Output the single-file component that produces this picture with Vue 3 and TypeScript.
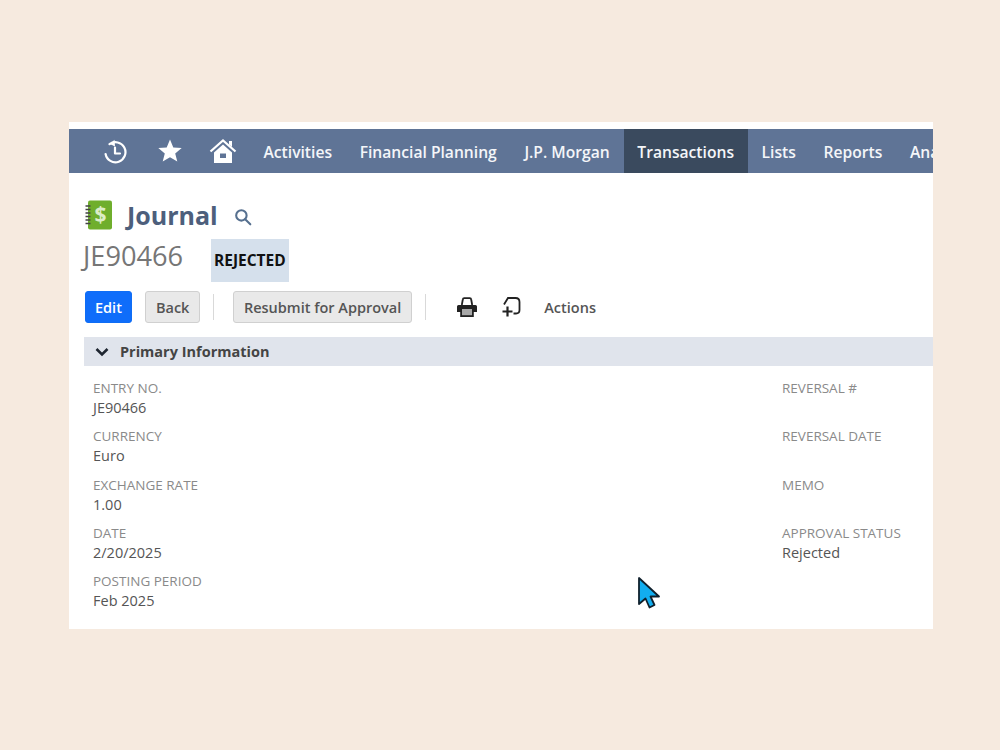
<script setup lang="ts">
// Journal record view inside a cropped screenshot frame.
interface Field {
  label: string
  value?: string
}

const navItems = ['Activities', 'Financial Planning', 'J.P. Morgan', 'Transactions', 'Lists', 'Reports', 'Ana']

const leftFields: Field[] = [
  { label: 'ENTRY NO.', value: 'JE90466' },
  { label: 'CURRENCY', value: 'Euro' },
  { label: 'EXCHANGE RATE', value: '1.00' },
  { label: 'DATE', value: '2/20/2025' },
  { label: 'POSTING PERIOD', value: 'Feb 2025' },
]

const rightFields: Field[] = [
  { label: 'REVERSAL #' },
  { label: 'REVERSAL DATE' },
  { label: 'MEMO' },
  { label: 'APPROVAL STATUS', value: 'Rejected' },
]
</script>

<template>
  <div class="page">
    <div class="card">
      <nav class="nav">
        <div class="nav-icons">
          <svg width="26" height="26" viewBox="0 0 26 26" fill="none" stroke="#fff" stroke-width="2.200">
            <path d="M7.500 6.200A10 10 0 1 1 3.600 16" stroke-linecap="round" />
            <path d="M12.500 1.800 8 6l5 2.400z" fill="#fff" stroke="none" />
            <path d="M13 9.500v6h5" stroke-linecap="round" stroke-linejoin="round" />
          </svg>
          <svg class="ic-star" width="26" height="26" viewBox="0 0 26 26">
            <path d="M13 1.500l3.300 7.900 8.400.6-6.500 5.400 2.100 8.200L13 19.200l-7.300 4.400 2.100-8.200L1.300 10l8.400-.6z" fill="#fff" />
          </svg>
          <svg class="ic-home" width="28" height="26" viewBox="0 0 28 26" fill="none">
            <path d="M1.500 13.500 14 2.500l12.500 11" stroke="#fff" stroke-width="2.200" />
            <path d="M20 3h3v6l-3-2.600z" fill="#fff" />
            <path fill-rule="evenodd" d="M14 6.500 23 14.500V25H5V14.500zM11 15.500v4.500h6v-4.500z" fill="#fff" />
          </svg>
        </div>
        <a
          v-for="item in navItems"
          :key="item"
          class="nav-item"
          :class="{ active: item === 'Transactions' }"
        >{{ item }}</a>
      </nav>

      <div class="body">
        <div class="title-row">
          <svg width="28" height="30" viewBox="0 0 28 30">
            <rect x="3" y="0.500" width="24" height="29" rx="2" fill="#6fae2c" />
            <g stroke="#444" stroke-width="1.500">
              <path d="M0.500 6h5M0.500 9.500h5M0.500 13h5M0.500 16.500h5M0.500 20h5M0.500 23.500h5" />
            </g>
            <text x="15.500" y="22" text-anchor="middle" class="dollar">$</text>
          </svg>
          <h1 class="title">Journal</h1>
          <svg class="search" width="18" height="18" viewBox="0 0 19 19" fill="none" stroke="#56708f" stroke-width="2.200">
            <circle cx="7.800" cy="7.800" r="5.500" />
            <path d="M11.800 11.800l5.400 5.400" stroke-linecap="round" />
          </svg>
        </div>

        <div class="record-row">
          <span class="record-id">JE90466</span>
          <span class="badge">REJECTED</span>
        </div>

        <div class="toolbar">
          <button class="btn primary">Edit</button>
          <button class="btn">Back</button>
          <span class="sep"></span>
          <button class="btn">Resubmit for Approval</button>
          <span class="sep"></span>
          <svg class="ic-print" width="20" height="21" viewBox="0 0 20 21">
            <path d="M4.800 8 5.800 2.500Q6 1.200 7.200 1.200h5.600q1.200 0 1.400 1.300L15.200 8" fill="none" stroke="#222" stroke-width="1.800" />
            <path d="M1.500 8h17a1.500 1.500 0 0 1 1.500 1.500V15h-3.200v5H3.200v-5H0V9.500A1.500 1.500 0 0 1 1.500 8z" fill="#222" />
            <rect x="5" y="12" width="10" height="6.200" fill="#a8a8a8" />
          </svg>
          <svg class="ic-add" width="20" height="20" viewBox="0 0 20 20" fill="none" stroke="#222" stroke-width="1.800">
            <path d="M2 7.500 6 1h7.500Q17.500 1 17.500 5v8q0 3.500-3.500 3.500h-2.500" />
            <path d="M.5 14.500h10M5.500 9.500v10" stroke-width="2.200" />
          </svg>
          <span class="actions">Actions</span>
        </div>

        <div class="section">
          <svg width="14" height="10" viewBox="0 0 14 10" fill="none" stroke="#1e2530" stroke-width="2.600">
            <path d="M1.500 2l5.500 5.500L12.500 2" />
          </svg>
          <span>Primary Information</span>
        </div>

        <div class="fields">
          <div class="col">
            <div v-for="f in leftFields" :key="f.label" class="field">
              <div class="label">{{ f.label }}</div>
              <div class="value">{{ f.value }}</div>
            </div>
          </div>
          <div class="col right">
            <div v-for="f in rightFields" :key="f.label" class="field">
              <div class="label">{{ f.label }}</div>
              <div v-if="f.value" class="value">{{ f.value }}</div>
            </div>
          </div>
        </div>
      </div>

      <!-- mouse pointer lying over the record -->
      <svg class="pointer" width="24" height="34" viewBox="0 0 24 34">
        <path d="M2 2v26l6.500-5.500 4 9 5-2.500-4-8.500h8.500z" fill="#12aef0" stroke="#10202c" stroke-width="1.800" stroke-linejoin="round" />
      </svg>
    </div>
  </div>
</template>

<style>
html,
body {
  margin: 0;
  background: #f6eadf;
}
</style>

<style scoped>
.page {
  width: 1000px;
  height: 750px;
  padding: 122px 0 0 69px;
  box-sizing: border-box;
  background: #f6eadf;
  font-family: "Open Sans", "Noto Sans", sans-serif;
  overflow: hidden;
}

.card {
  position: relative;
  width: 864px;
  height: 507px;
  padding-top: 7px;
  box-sizing: border-box;
  background: #fff;
  overflow: hidden;
}

.nav {
  display: flex;
  align-items: stretch;
  height: 44px;
  padding-left: 33px;
  background: #5f7496;
  white-space: nowrap;
}

.nav-icons {
  display: flex;
  align-items: center;
  flex: none;
}

.ic-star {
  margin-left: 29px;
}

.ic-home {
  margin-left: 26px;
}

.nav-item {
  display: flex;
  flex: none;
  align-items: center;
  padding: 2px 13.800px 0;
  font-size: 15.650px;
  font-weight: 600;
  color: #f4f6f9;
}

.nav-item:first-of-type {
  margin-left: 12.700px;
}

.nav-item.active {
  background: #3a4a5e;
}

.body {
  padding: 0 0 0 15px;
}

.title-row {
  display: flex;
  align-items: center;
  height: 30px;
  margin-top: 27px;
  padding-left: 1px;
}

.dollar {
  font-family: "Open Sans", sans-serif;
  font-size: 21px;
  font-weight: 700;
  fill: #dcedc8;
}

.title {
  margin: 0 0 0 14px;
  font-size: 25px;
  font-weight: 700;
  line-height: 30px;
  color: #4d5f7c;
}

.search {
  margin: 3px 0 0 16px;
}

.record-row {
  display: flex;
  align-items: center;
  height: 43px;
  margin-top: 9px;
  margin-left: -1px;
}

.record-id {
  width: 128px;
  font-size: 27.200px;
  margin-top: -10px;
  color: #767676;
}

.badge {
  display: flex;
  align-items: center;
  height: 43px;
  padding: 0 3px 2px;
  box-sizing: border-box;
  font-size: 15.500px;
  font-weight: 700;
  color: #111;
  background: #d5e0ec;
}

.toolbar {
  display: flex;
  align-items: center;
  height: 32px;
  margin-top: 9px;
  padding-left: 1px;
}

.btn {
  height: 32px;
  padding: 0 9.500px;
  margin-right: 13.500px;
  border: 1px solid #d0d0d0;
  border-radius: 3px;
  background: #e9e9e9;
  font-family: inherit;
  font-size: 14.500px;
  font-weight: 600;
  color: #555;
}

.btn.primary {
  margin-right: 13.500px;
  padding: 0 9px;
  border-color: #0f6df5;
  background: #0f6dfa;
  color: #fff;
}

.sep {
  width: 1px;
  height: 26px;
  margin-right: 19px;
  background: #d9d9d9;
}

.ic-print {
  margin-left: 12px;
}

.ic-add {
  margin-left: 25px;
}

.actions {
  margin-left: 22px;
  font-size: 14.500px;
  font-weight: 600;
  color: #555;
}

.section {
  display: flex;
  align-items: center;
  gap: 11px;
  height: 29px;
  margin-top: 14px;
  padding-left: 11px;
  background: #e0e4ec;
  font-size: 14.500px;
  font-weight: 700;
  color: #444;
}

.fields {
  display: flex;
  padding: 12px 0 0 9px;
}

.col {
  width: 689px;
  flex: none;
}

.field {
  height: 48.250px;
}

.label {
  font-size: 13.500px;
  line-height: 20px;
  color: #8a8a8a;
}

.value {
  font-size: 14.500px;
  line-height: 20px;
  color: #555;
}

.pointer {
  position: absolute;
  left: 568px;
  top: 454px;
}
</style>
